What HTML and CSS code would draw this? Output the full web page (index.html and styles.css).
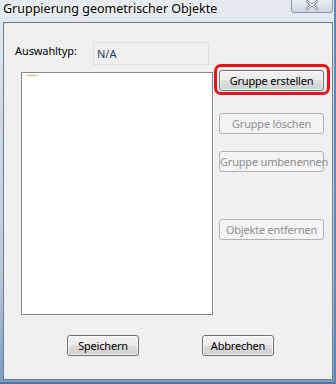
FILE: index.html
```html
<!DOCTYPE html>
<html lang="de">
<head>
    <meta charset="UTF-8">
    <title>Gruppierung geometrischer Objekte</title>
    <link rel="stylesheet" href="styles.css">
</head>
<body>

<div class="window">
    <div class="titlebar">
        <span class="title">Gruppierung geometrischer Objekte</span>
        <button class="close" type="button" aria-label="Schließen">
            <svg width="14" height="10" viewBox="0 0 14 10">
                <path d="M2 0 L7 4 L12 0 L13 1.5 L8.8 5 L13 8.5 L12 10 L7 6 L2 10 L1 8.5 L5.2 5 L1 1.5 Z" fill="#fff" stroke="#5a6470" stroke-width="0.8"/>
            </svg>
        </button>
    </div>

    <div class="client">
        <div class="type-row">
            <label class="type-label">Auswahltyp:</label>
            <div class="type-field">N/A</div>
        </div>

        <div class="main">
            <div class="listbox">
                <span class="list-mark"></span>
            </div>
            <div class="actions">
                <button class="btn btn-wide highlighted" type="button">Gruppe erstellen</button>
                <button class="btn btn-wide btn-delete" type="button" disabled>Gruppe löschen</button>
                <button class="btn btn-wide btn-rename" type="button" disabled>Gruppe umbenennen</button>
                <button class="btn btn-wide btn-remove" type="button" disabled>Objekte entfernen</button>
            </div>
        </div>

        <div class="footer">
            <button class="btn btn-small" type="button">Speichern</button>
            <button class="btn btn-small" type="button">Abbrechen</button>
        </div>
    </div>
</div>

</body>
</html>
```

FILE: styles.css
```css
/* Page */
body {
    margin: 0;
    font-family: "Noto Sans", "Open Sans", sans-serif;
    font-size: 11px;
    color: #000;
}

/* Window frame (Aero glass look) */
.window {
    width: 336px;
    height: 384px;
    box-sizing: border-box;
    display: flex;
    flex-direction: column;
    background: linear-gradient(180deg, #e6ebf1 0%, #cfdae6 30%, #bccbdc 70%, #7b9cc2 100%);
    border-right: 2px solid #5f86b4;
    border-bottom: 2px solid #4f78a8;
}

/* Title bar */
.titlebar {
    height: 22px;
    display: flex;
    align-items: flex-start;
    justify-content: space-between;
    padding-left: 3px;
}

.title {
    font-size: 12.5px;
    line-height: 15px;
    padding-top: 1px;
    color: #000;
    text-shadow: 0 0 6px #fff, 0 0 3px #fff;
}

.close {
    width: 42px;
    height: 13px;
    margin-right: 1px;
    padding: 0;
    border: 1px solid #8a98a8;
    border-top: none;
    border-radius: 0 0 4px 4px;
    background: linear-gradient(180deg, #e8eef4, #cdd8e4);
    display: flex;
    justify-content: center;
    align-items: flex-start;
}

/* Client area */
.client {
    flex: 1;
    margin: 0 1px 2px 3px;
    border: 1px solid #6e7e90;
    background: #f0f0f0;
    display: flex;
    flex-direction: column;
}

/* Auswahltyp row */
.type-row {
    display: flex;
    align-items: flex-start;
    padding: 19px 0 0 11px;
}

.type-label {
    width: 78px;
    line-height: 18px;
    letter-spacing: -0.1px;
}

.type-field {
    width: 111px;
    height: 21px;
    border: 1px solid #dadfe3;
    background: #f0f0f0;
    color: #1f3a5f;
    line-height: 21px;
    padding-left: 3px;
}

/* List + action buttons */
.main {
    display: flex;
    align-items: flex-start;
    margin-top: 7px;
    padding-left: 17px;
}

.listbox {
    width: 190px;
    height: 241px;
    border: 1px solid #828790;
    background: #fff;
    position: relative;
}

.list-mark {
    position: absolute;
    left: 5px;
    top: 2px;
    width: 11px;
    height: 1px;
    background: linear-gradient(90deg, #d07a4a 0 1px, #c9b552 1px 9px, transparent 9px 10px, #8a8a8a 10px 11px);
}

.actions {
    display: flex;
    flex-direction: column;
    margin-left: 6px;
    margin-top: -2px;
}

/* Buttons */
.btn {
    font-family: inherit;
    font-size: 11px;
    letter-spacing: -0.2px;
    color: #000;
    height: 21px;
    padding: 0;
    border: 1px solid #707070;
    border-radius: 3px;
    background: linear-gradient(180deg, #f2f2f2 0%, #ebebeb 48%, #dddddd 52%, #cfcfcf 100%);
    box-shadow: inset 0 0 0 1px rgba(255, 255, 255, 0.7);
    white-space: nowrap;
    overflow: visible;
}

.btn:disabled {
    color: #8d8d8d;
    background: #f4f4f4;
    border-color: #adb2b5;
    box-shadow: none;
}

.btn-wide {
    width: 105px;
}

.btn-delete {
    margin-top: 22px;
}

.btn-rename {
    margin-top: 17px;
}

.btn-remove {
    margin-top: 47px;
}

.btn-small {
    width: 72px;
}

/* Red annotation around the first button */
.highlighted {
    position: relative;
}

.highlighted::after {
    content: "";
    position: absolute;
    left: -6px;
    right: -7px;
    top: -7px;
    bottom: -5px;
    border: 3px solid #e8141b;
    border-radius: 7px;
}

/* Footer */
.footer {
    display: flex;
    gap: 63px;
    padding-left: 63px;
    margin-top: 20px;
}
```
